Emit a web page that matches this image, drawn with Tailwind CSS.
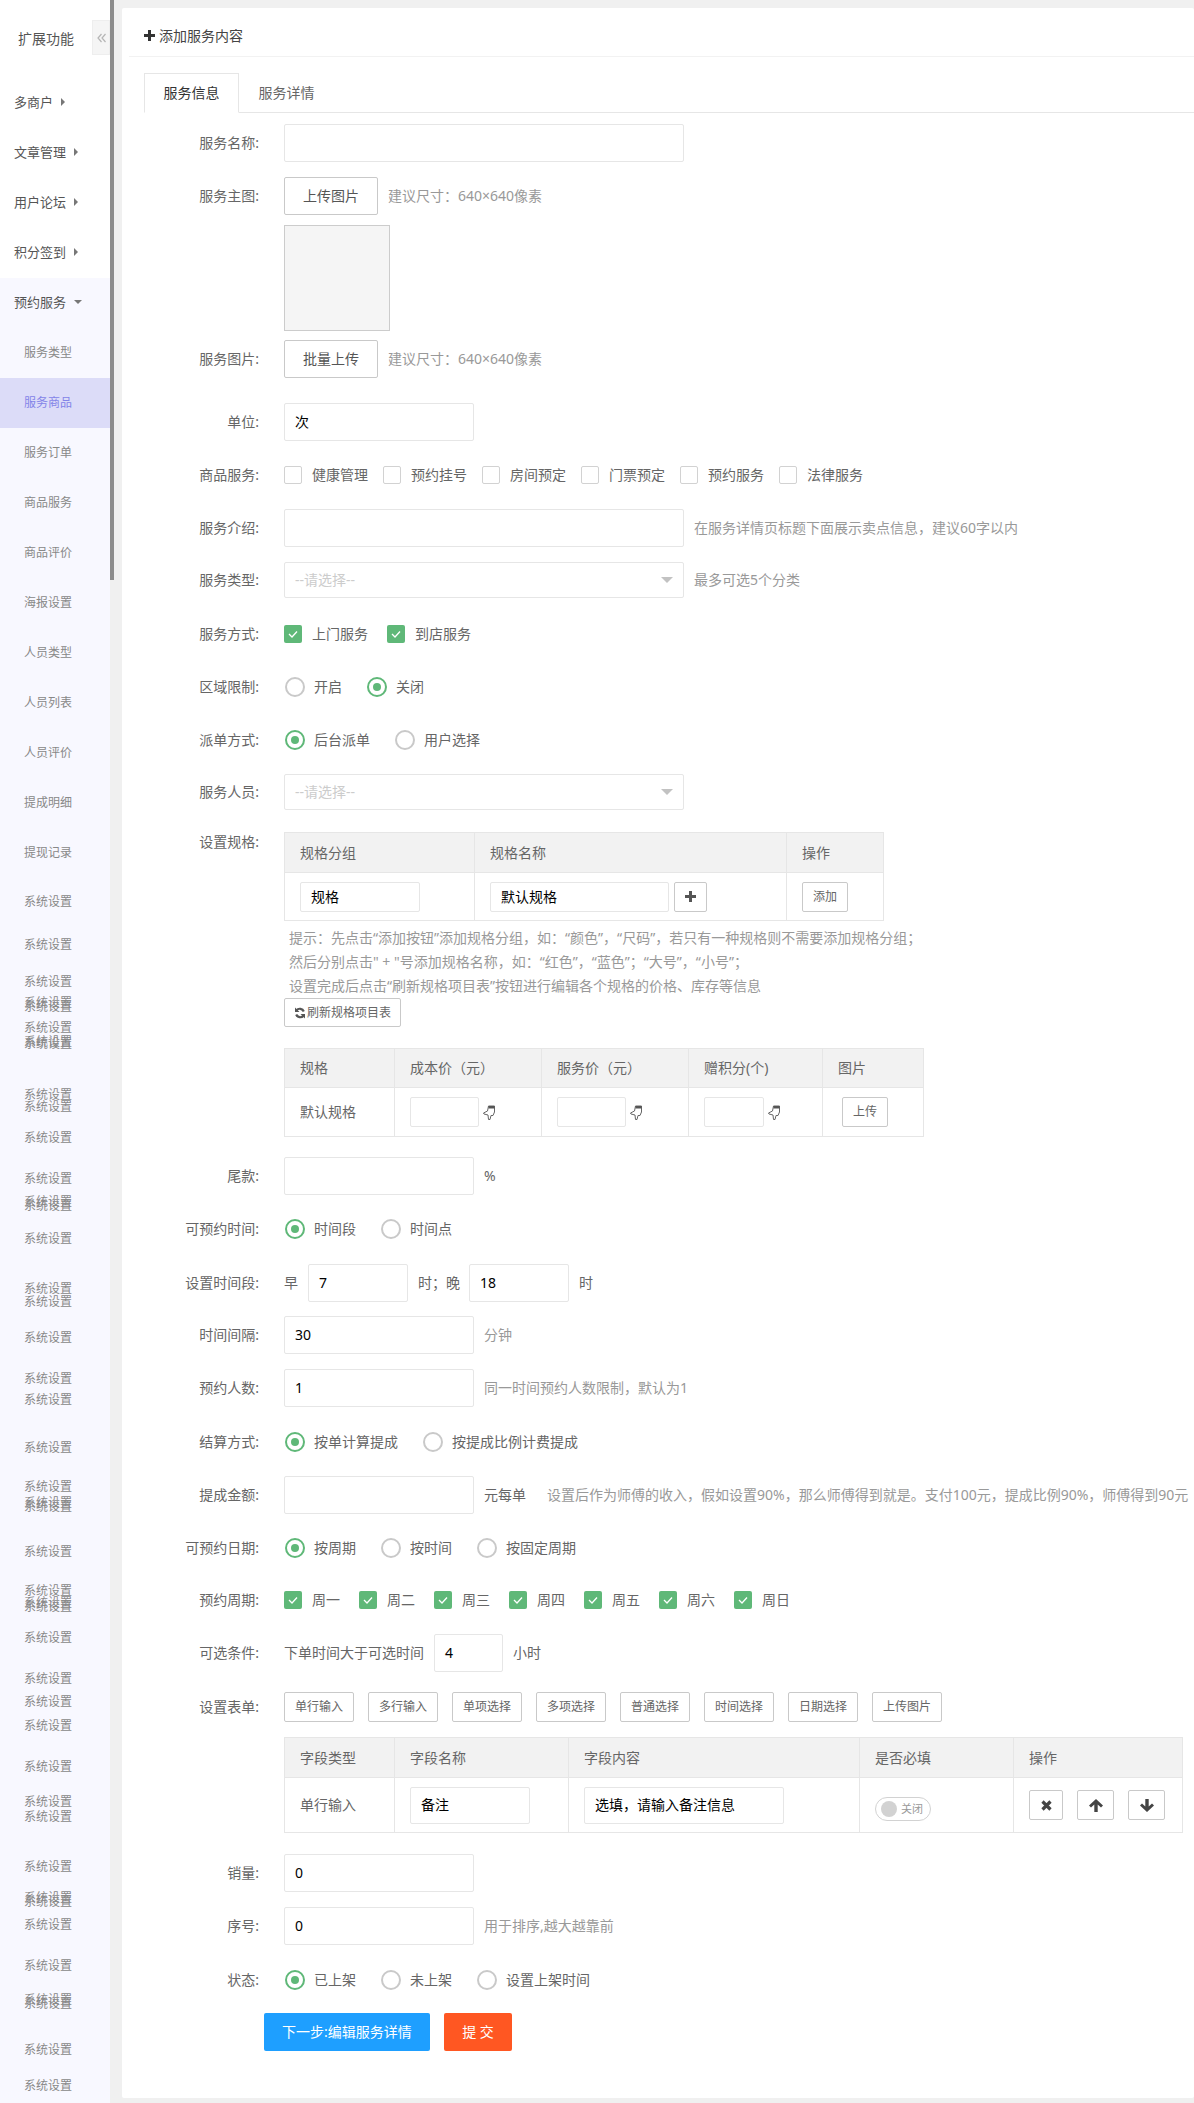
<!DOCTYPE html>
<html lang="zh-CN">
<head>
  <meta charset="UTF-8" />
  <title>添加服务内容</title>
  <script src="https://cdn.jsdelivr.net/npm/@tailwindcss/browser@4"></script>
</head>
<body class="bg-[#f0f0f0] text-[#666] text-[14px] leading-[20px] font-['Noto_Sans','Noto_Sans_CJK_SC',sans-serif]">
<div class="flex h-[2103px] overflow-hidden">

  <!-- Sidebar -->
  <aside class="w-[110px] shrink-0 bg-white text-[13px] text-[#555]">
    <div class="flex h-[78px] items-start">
      <div class="w-[92px] pt-[23px] h-[55px] flex items-center justify-center text-[14px]">扩展功能</div>
      <div class="w-[18px] h-[35px] mt-[20px] bg-[#f5f5f5] border border-[#eee] flex items-center justify-center">
        <svg class="w-[9px] h-[10px]" viewBox="0 0 9 10" fill="none" stroke="#b5b5b5" stroke-width="1.2"><path d="M4.500 1L1 5l3.500 4M8.500 1L5 5l3.500 4"/></svg>
      </div>
    </div>
    <div class="h-[50px] pl-[14px] pb-[2px] flex items-center gap-[8px]">多商户 <span class="w-0 h-0 border-y-[4px] border-y-transparent border-l-[4px] border-l-[#777]"></span></div>
    <div class="h-[50px] pl-[14px] pb-[2px] flex items-center gap-[8px]">文章管理 <span class="w-0 h-0 border-y-[4px] border-y-transparent border-l-[4px] border-l-[#777]"></span></div>
    <div class="h-[50px] pl-[14px] pb-[2px] flex items-center gap-[8px]">用户论坛 <span class="w-0 h-0 border-y-[4px] border-y-transparent border-l-[4px] border-l-[#777]"></span></div>
    <div class="h-[50px] pl-[14px] pb-[2px] flex items-center gap-[8px]">积分签到 <span class="w-0 h-0 border-y-[4px] border-y-transparent border-l-[4px] border-l-[#777]"></span></div>
    <div class="bg-[#f8f8ff] h-[1825px] text-[12px] text-[#888] text-center">
      <div class="h-[50px] pl-[14px] pb-[2px] flex items-center gap-[8px] text-[13px] text-[#555]">预约服务 <span class="w-0 h-0 border-x-[4px] border-x-transparent border-t-[4px] border-t-[#777]"></span></div>
      <div class="h-[50px] pr-[14px] leading-[50px]">服务类型</div>
      <div class="h-[50px] pr-[14px] leading-[50px] bg-[#dcdcf8] text-[#8484e8]">服务商品</div>
      <div class="h-[50px] pr-[14px] leading-[50px]">服务订单</div>
      <div class="h-[50px] pr-[14px] leading-[50px]">商品服务</div>
      <div class="h-[50px] pr-[14px] leading-[50px]">商品评价</div>
      <div class="h-[50px] pr-[14px] leading-[50px]">海报设置</div>
      <div class="h-[50px] pr-[14px] leading-[50px]">人员类型</div>
      <div class="h-[50px] pr-[14px] leading-[50px]">人员列表</div>
      <div class="h-[50px] pr-[14px] leading-[50px]">人员评价</div>
      <div class="h-[50px] pr-[14px] leading-[50px]">提成明细</div>
      <div class="h-[50px] pr-[14px] leading-[50px]">提现记录</div>
      <!-- rows below overlap in the source, text centre sits on each row's top edge -->
      <div class="mt-[24px] pr-[14px] leading-[0px]">
        <div class="h-[43px]">系统设置</div>
        <div class="h-[37px]">系统设置</div>
        <div class="h-[21px]">系统设置</div>
        <div class="h-[4px]">系统设置</div>
        <div class="h-[21px]">系统设置</div>
        <div class="h-[14px]">系统设置</div>
        <div class="h-[2px]">系统设置</div>
        <div class="h-[51px]">系统设置</div>
        <div class="h-[12px]">系统设置</div>
        <div class="h-[31px]">系统设置</div>
        <div class="h-[41px]">系统设置</div>
        <div class="h-[23px]">系统设置</div>
        <div class="h-[4px]">系统设置</div>
        <div class="h-[33px]">系统设置</div>
        <div class="h-[50px]">系统设置</div>
        <div class="h-[13px]">系统设置</div>
        <div class="h-[36px]">系统设置</div>
        <div class="h-[41px]">系统设置</div>
        <div class="h-[21px]">系统设置</div>
        <div class="h-[48px]">系统设置</div>
        <div class="h-[39px]">系统设置</div>
        <div class="h-[16px]">系统设置</div>
        <div class="h-[4px]">系统设置</div>
        <div class="h-[45px]">系统设置</div>
        <div class="h-[39px]">系统设置</div>
        <div class="h-[12px]">系统设置</div>
        <div class="h-[4px]">系统设置</div>
        <div class="h-[31px]">系统设置</div>
        <div class="h-[41px]">系统设置</div>
        <div class="h-[23px]">系统设置</div>
        <div class="h-[24px]">系统设置</div>
        <div class="h-[41px]">系统设置</div>
        <div class="h-[35px]">系统设置</div>
        <div class="h-[15px]">系统设置</div>
        <div class="h-[50px]">系统设置</div>
        <div class="h-[31px]">系统设置</div>
        <div class="h-[4px]">系统设置</div>
        <div class="h-[23px]">系统设置</div>
        <div class="h-[41px]">系统设置</div>
        <div class="h-[34px]">系统设置</div>
        <div class="h-[4px]">系统设置</div>
        <div class="h-[46px]">系统设置</div>
        <div class="h-[36px]">系统设置</div>
        <div class="h-[13px]">系统设置</div>
      </div>
    </div>
  </aside>

  <!-- Scrollbar -->
  <div class="w-[4px] shrink-0 bg-[#f0f0f0]"><div class="h-[580px] bg-[#8c8c8c]"></div></div>

  <!-- Main -->
  <main class="flex-1 min-w-0 pl-[8px] pt-[8px]">
    <div class="bg-white rounded-[2px] h-[2090px]">
      <div class="h-[49px] ml-[7px] pl-[15px] pt-[7px] border-b border-[#f2f2f2] flex items-center gap-[4px] text-[#444]">
        <svg class="w-[11px] h-[11px]" viewBox="0 0 11 11"><path d="M4 0h3v4h4v3H7v4H4V7H0V4h4z" fill="#333"/></svg>
        添加服务内容
      </div>

      <!-- Tabs -->
      <div class="mt-[16px] ml-[22px] h-[40px] flex border-b border-[#e6e6e6]">
        <div class="w-[95px] h-[40px] border border-[#e6e6e6] border-b-white bg-white text-[#333] flex items-center justify-center">服务信息</div>
        <div class="w-[95px] h-[40px] flex items-center justify-center">服务详情</div>
      </div>

      <form class="pl-[162px]">
        <!-- 服务名称 -->
        <div class="relative flex items-center h-[38px] mt-[11px]">
          <label class="w-[137px] -ml-[162px] mr-[25px] text-right">服务名称:</label>
          <div class="w-[400px] h-[38px] border border-[#e6e6e6] rounded-[2px]"></div>
        </div>

        <!-- 服务主图 -->
        <div class="flex items-center h-[38px] mt-[15px]">
          <label class="w-[137px] -ml-[162px] mr-[25px] text-right">服务主图:</label>
          <div class="w-[94px] h-[38px] border border-[#c9c9c9] rounded-[2px] flex items-center justify-center text-[#555]">上传图片</div>
          <span class="ml-[10px] text-[#999]">建议尺寸：640×640像素</span>
        </div>
        <div class="w-[106px] h-[106px] mt-[10px] bg-[#f5f5f5] border border-[#ccc]"></div>

        <!-- 服务图片 -->
        <div class="flex items-center h-[38px] mt-[9px]">
          <label class="w-[137px] -ml-[162px] mr-[25px] text-right">服务图片:</label>
          <div class="w-[94px] h-[38px] border border-[#c9c9c9] rounded-[2px] flex items-center justify-center text-[#555]">批量上传</div>
          <span class="ml-[10px] text-[#999]">建议尺寸：640×640像素</span>
        </div>

        <!-- 单位 -->
        <div class="flex items-center h-[38px] mt-[25px]">
          <label class="w-[137px] -ml-[162px] mr-[25px] text-right">单位:</label>
          <div class="w-[190px] h-[38px] pl-[10px] border border-[#e6e6e6] rounded-[2px] flex items-center text-black">次</div>
        </div>

        <!-- 商品服务 -->
        <div class="flex items-center h-[18px] mt-[25px]">
          <label class="w-[137px] -ml-[162px] mr-[25px] text-right">商品服务:</label>
          <div class="flex items-center">
            <span class="w-[18px] h-[18px] border border-[#d2d2d2] rounded-[2px] mr-[10px]"></span><span class="mr-[15px]">健康管理</span>
            <span class="w-[18px] h-[18px] border border-[#d2d2d2] rounded-[2px] mr-[10px]"></span><span class="mr-[15px]">预约挂号</span>
            <span class="w-[18px] h-[18px] border border-[#d2d2d2] rounded-[2px] mr-[10px]"></span><span class="mr-[15px]">房间预定</span>
            <span class="w-[18px] h-[18px] border border-[#d2d2d2] rounded-[2px] mr-[10px]"></span><span class="mr-[15px]">门票预定</span>
            <span class="w-[18px] h-[18px] border border-[#d2d2d2] rounded-[2px] mr-[10px]"></span><span class="mr-[15px]">预约服务</span>
            <span class="w-[18px] h-[18px] border border-[#d2d2d2] rounded-[2px] mr-[10px]"></span><span class="mr-[15px]">法律服务</span>
          </div>
        </div>

        <!-- 服务介绍 -->
        <div class="flex items-center h-[38px] mt-[25px]">
          <label class="w-[137px] -ml-[162px] mr-[25px] text-right">服务介绍:</label>
          <div class="w-[400px] h-[38px] border border-[#e6e6e6] rounded-[2px]"></div>
          <span class="ml-[10px] text-[#999]">在服务详情页标题下面展示卖点信息，建议60字以内</span>
        </div>

        <!-- 服务类型 -->
        <div class="flex items-center h-[36px] mt-[15px]">
          <label class="w-[137px] -ml-[162px] mr-[25px] text-right">服务类型:</label>
          <div class="w-[400px] h-[36px] px-[10px] border border-[#e6e6e6] rounded-[2px] flex items-center justify-between text-[#ccc]">--请选择--<span class="w-0 h-0 border-x-[6px] border-x-transparent border-t-[6px] border-t-[#c2c2c2]"></span></div>
          <span class="ml-[10px] text-[#999]">最多可选5个分类</span>
        </div>

        <!-- 服务方式 -->
        <div class="flex items-center h-[18px] mt-[27px]">
          <label class="w-[137px] -ml-[162px] mr-[25px] text-right">服务方式:</label>
          <span class="w-[18px] h-[18px] rounded-[2px] bg-[#5fb878] mr-[10px] flex items-center justify-center"><svg class="w-[12px] h-[12px]" viewBox="0 0 12 12" fill="none" stroke="white" stroke-width="1.3"><path d="M2 6l3 3 5-5.5"/></svg></span><span class="mr-[19px]">上门服务</span>
          <span class="w-[18px] h-[18px] rounded-[2px] bg-[#5fb878] mr-[10px] flex items-center justify-center"><svg class="w-[12px] h-[12px]" viewBox="0 0 12 12" fill="none" stroke="white" stroke-width="1.3"><path d="M2 6l3 3 5-5.5"/></svg></span><span>到店服务</span>
        </div>

        <!-- 区域限制 -->
        <div class="flex items-center h-[20px] mt-[34px]">
          <label class="w-[137px] -ml-[162px] mr-[25px] text-right">区域限制:</label>
          <span class="ml-[1px] w-[20px] h-[20px] rounded-full border-2 border-[#c9c9c9] mr-[9px]"></span><span class="mr-[25px]">开启</span>
          <span class="w-[20px] h-[20px] rounded-full border-2 border-[#5fb878] mr-[9px] flex items-center justify-center"><span class="w-[8px] h-[8px] rounded-full bg-[#5fb878]"></span></span><span>关闭</span>
        </div>

        <!-- 派单方式 -->
        <div class="flex items-center h-[20px] mt-[33px]">
          <label class="w-[137px] -ml-[162px] mr-[25px] text-right">派单方式:</label>
          <span class="ml-[1px] w-[20px] h-[20px] rounded-full border-2 border-[#5fb878] mr-[9px] flex items-center justify-center"><span class="w-[8px] h-[8px] rounded-full bg-[#5fb878]"></span></span><span class="mr-[25px]">后台派单</span>
          <span class="w-[20px] h-[20px] rounded-full border-2 border-[#c9c9c9] mr-[9px]"></span><span>用户选择</span>
        </div>

        <!-- 服务人员 -->
        <div class="flex items-center h-[36px] mt-[24px]">
          <label class="w-[137px] -ml-[162px] mr-[25px] text-right">服务人员:</label>
          <div class="w-[400px] h-[36px] px-[10px] border border-[#e6e6e6] rounded-[2px] flex items-center justify-between text-[#ccc]">--请选择--<span class="w-0 h-0 border-x-[6px] border-x-transparent border-t-[6px] border-t-[#c2c2c2]"></span></div>
        </div>

        <!-- 设置规格 -->
        <div class="flex items-start mt-[22px]">
          <label class="w-[137px] -ml-[162px] mr-[25px] text-right">设置规格:</label>
          <div>
            <table class="w-[600px] table-fixed border-collapse border border-[#e6e6e6]">
              <tr class="h-[40px] bg-[#f2f2f2] text-left">
                <th class="w-[190px] font-normal pl-[15px] border border-[#e6e6e6]">规格分组</th>
                <th class="w-[312px] font-normal pl-[15px] border border-[#e6e6e6]">规格名称</th>
                <th class="font-normal pl-[15px] border border-[#e6e6e6]">操作</th>
              </tr>
              <tr class="h-[48px]">
                <td class="pl-[15px] border border-[#e6e6e6]"><div class="w-[120px] h-[30px] pl-[10px] border border-[#e6e6e6] rounded-[2px] flex items-center text-black">规格</div></td>
                <td class="pl-[15px] border border-[#e6e6e6]"><div class="flex gap-[5px]"><div class="w-[179px] h-[30px] pl-[10px] border border-[#e6e6e6] rounded-[2px] flex items-center text-black">默认规格</div><div class="w-[33px] h-[30px] border border-[#c9c9c9] rounded-[2px] flex items-center justify-center"><svg class="w-[11px] h-[11px]" viewBox="0 0 11 11"><path d="M4 0h3v4h4v3H7v4H4V7H0V4h4z" fill="#555"/></svg></div></div></td>
                <td class="pl-[15px] border border-[#e6e6e6]"><div class="w-[46px] h-[30px] border border-[#c9c9c9] rounded-[2px] flex items-center justify-center text-[12px]">添加</div></td>
              </tr>
            </table>
            <div class="mt-[5px] pl-[5px] leading-[24px] text-[#999] whitespace-nowrap">
              <p>提示：先点击“添加按钮”添加规格分组，如：“颜色”，“尺码”，若只有一种规格则不需要添加规格分组；</p>
              <p>然后分别点击" + "号添加规格名称，如：“红色”，“蓝色”；“大号”，“小号”；</p>
              <p>设置完成后点击“刷新规格项目表”按钮进行编辑各个规格的价格、库存等信息</p>
            </div>
            <div class="w-[117px] h-[29px] border border-[#c9c9c9] rounded-[2px] flex items-center justify-center gap-[1px] text-[12px]">
              <svg class="w-[12px] h-[12px]" viewBox="0 0 12 12" fill="none" stroke="#555" stroke-width="2.2"><path d="M9.800 4.500A4.300 4.300 0 0 0 2.500 3.300M2.200 7.500A4.300 4.300 0 0 0 9.500 8.700"/><path d="M1 .5v4.500h4.500zM11 11.500V7H6.500z" fill="#555" stroke="none"/></svg>刷新规格项目表
            </div>
            <table class="w-[640px] mt-[21px] table-fixed border-collapse border border-[#e6e6e6]">
              <tr class="h-[39px] bg-[#f2f2f2] text-left">
                <th class="w-[110px] font-normal pl-[15px] border border-[#e6e6e6]">规格</th>
                <th class="w-[147px] font-normal pl-[15px] border border-[#e6e6e6]">成本价（元）</th>
                <th class="w-[147px] font-normal pl-[15px] border border-[#e6e6e6]">服务价（元）</th>
                <th class="w-[134px] font-normal pl-[15px] border border-[#e6e6e6]">赠积分(个)</th>
                <th class="font-normal pl-[15px] border border-[#e6e6e6]">图片</th>
              </tr>
              <tr class="h-[49px]">
                <td class="pl-[15px] border border-[#e6e6e6]">默认规格</td>
                <td class="pl-[15px] border border-[#e6e6e6]"><div class="flex items-center gap-[4px]"><div class="w-[69px] h-[30px] border border-[#e6e6e6] rounded-[2px]"></div><svg class="w-[13px] h-[15px]" viewBox="0 0 13 15"><path d="M5.500 1h6v6L10 10.500H8L7 14.500H5.500L5 10 1 9 .5 8l4-2z" fill="white" stroke="#666"/><path d="M5.500 1h6v2.500h-6z" fill="#555"/></svg></div></td>
                <td class="pl-[15px] border border-[#e6e6e6]"><div class="flex items-center gap-[4px]"><div class="w-[69px] h-[30px] border border-[#e6e6e6] rounded-[2px]"></div><svg class="w-[13px] h-[15px]" viewBox="0 0 13 15"><path d="M5.500 1h6v6L10 10.500H8L7 14.500H5.500L5 10 1 9 .5 8l4-2z" fill="white" stroke="#666"/><path d="M5.500 1h6v2.500h-6z" fill="#555"/></svg></div></td>
                <td class="pl-[15px] border border-[#e6e6e6]"><div class="flex items-center gap-[4px]"><div class="w-[60px] h-[30px] border border-[#e6e6e6] rounded-[2px]"></div><svg class="w-[13px] h-[15px]" viewBox="0 0 13 15"><path d="M5.500 1h6v6L10 10.500H8L7 14.500H5.500L5 10 1 9 .5 8l4-2z" fill="white" stroke="#666"/><path d="M5.500 1h6v2.500h-6z" fill="#555"/></svg></div></td>
                <td class="pl-[19px] border border-[#e6e6e6]"><div class="w-[46px] h-[30px] border border-[#c9c9c9] rounded-[2px] flex items-center justify-center text-[12px]">上传</div></td>
              </tr>
            </table>
          </div>
        </div>

        <!-- 尾款 -->
        <div class="flex items-center h-[38px] mt-[20px]">
          <label class="w-[137px] -ml-[162px] mr-[25px] text-right">尾款:</label>
          <div class="w-[190px] h-[38px] border border-[#e6e6e6] rounded-[2px]"></div>
          <span class="ml-[10px]">%</span>
        </div>

        <!-- 可预约时间 -->
        <div class="flex items-center h-[20px] mt-[24px]">
          <label class="w-[137px] -ml-[162px] mr-[25px] text-right">可预约时间:</label>
          <span class="ml-[1px] w-[20px] h-[20px] rounded-full border-2 border-[#5fb878] mr-[9px] flex items-center justify-center"><span class="w-[8px] h-[8px] rounded-full bg-[#5fb878]"></span></span><span class="mr-[25px]">时间段</span>
          <span class="w-[20px] h-[20px] rounded-full border-2 border-[#c9c9c9] mr-[9px]"></span><span>时间点</span>
        </div>

        <!-- 设置时间段 -->
        <div class="flex items-center h-[38px] mt-[25px]">
          <label class="w-[137px] -ml-[162px] mr-[25px] text-right">设置时间段:</label>
          <span class="mr-[10px]">早</span>
          <div class="w-[100px] h-[38px] pl-[10px] border border-[#e6e6e6] rounded-[2px] flex items-center text-black">7</div>
          <span class="ml-[10px] mr-[9px]">时；晚</span>
          <div class="w-[100px] h-[38px] pl-[10px] border border-[#e6e6e6] rounded-[2px] flex items-center text-black">18</div>
          <span class="ml-[10px]">时</span>
        </div>

        <!-- 时间间隔 -->
        <div class="flex items-center h-[38px] mt-[14px]">
          <label class="w-[137px] -ml-[162px] mr-[25px] text-right">时间间隔:</label>
          <div class="w-[190px] h-[38px] pl-[10px] border border-[#e6e6e6] rounded-[2px] flex items-center text-black">30</div>
          <span class="ml-[10px] text-[#999]">分钟</span>
        </div>

        <!-- 预约人数 -->
        <div class="flex items-center h-[38px] mt-[15px]">
          <label class="w-[137px] -ml-[162px] mr-[25px] text-right">预约人数:</label>
          <div class="w-[190px] h-[38px] pl-[10px] border border-[#e6e6e6] rounded-[2px] flex items-center text-black">1</div>
          <span class="ml-[10px] text-[#999]">同一时间预约人数限制，默认为1</span>
        </div>

        <!-- 结算方式 -->
        <div class="flex items-center h-[20px] mt-[25px]">
          <label class="w-[137px] -ml-[162px] mr-[25px] text-right">结算方式:</label>
          <span class="ml-[1px] w-[20px] h-[20px] rounded-full border-2 border-[#5fb878] mr-[9px] flex items-center justify-center"><span class="w-[8px] h-[8px] rounded-full bg-[#5fb878]"></span></span><span class="mr-[25px]">按单计算提成</span>
          <span class="w-[20px] h-[20px] rounded-full border-2 border-[#c9c9c9] mr-[9px]"></span><span>按提成比例计费提成</span>
        </div>

        <!-- 提成金额 -->
        <div class="flex items-center h-[38px] mt-[24px]">
          <label class="w-[137px] -ml-[162px] mr-[25px] text-right">提成金额:</label>
          <div class="w-[190px] h-[38px] border border-[#e6e6e6] rounded-[2px]"></div>
          <span class="ml-[10px] mr-[21px]">元每单</span>
          <span class="text-[#999] whitespace-nowrap">设置后作为师傅的收入，假如设置90%，那么师傅得到就是。支付100元，提成比例90%，师傅得到90元</span>
        </div>

        <!-- 可预约日期 -->
        <div class="flex items-center h-[20px] mt-[24px]">
          <label class="w-[137px] -ml-[162px] mr-[25px] text-right">可预约日期:</label>
          <span class="ml-[1px] w-[20px] h-[20px] rounded-full border-2 border-[#5fb878] mr-[9px] flex items-center justify-center"><span class="w-[8px] h-[8px] rounded-full bg-[#5fb878]"></span></span><span class="mr-[25px]">按周期</span>
          <span class="w-[20px] h-[20px] rounded-full border-2 border-[#c9c9c9] mr-[9px]"></span><span class="mr-[25px]">按时间</span>
          <span class="w-[20px] h-[20px] rounded-full border-2 border-[#c9c9c9] mr-[9px]"></span><span>按固定周期</span>
        </div>

        <!-- 预约周期 -->
        <div class="flex items-center h-[18px] mt-[33px]">
          <label class="w-[137px] -ml-[162px] mr-[25px] text-right">预约周期:</label>
          <span class="w-[18px] h-[18px] rounded-[2px] bg-[#5fb878] mr-[10px] flex items-center justify-center"><svg class="w-[12px] h-[12px]" viewBox="0 0 12 12" fill="none" stroke="white" stroke-width="1.3"><path d="M2 6l3 3 5-5.5"/></svg></span><span class="mr-[19px]">周一</span>
          <span class="w-[18px] h-[18px] rounded-[2px] bg-[#5fb878] mr-[10px] flex items-center justify-center"><svg class="w-[12px] h-[12px]" viewBox="0 0 12 12" fill="none" stroke="white" stroke-width="1.3"><path d="M2 6l3 3 5-5.5"/></svg></span><span class="mr-[19px]">周二</span>
          <span class="w-[18px] h-[18px] rounded-[2px] bg-[#5fb878] mr-[10px] flex items-center justify-center"><svg class="w-[12px] h-[12px]" viewBox="0 0 12 12" fill="none" stroke="white" stroke-width="1.3"><path d="M2 6l3 3 5-5.5"/></svg></span><span class="mr-[19px]">周三</span>
          <span class="w-[18px] h-[18px] rounded-[2px] bg-[#5fb878] mr-[10px] flex items-center justify-center"><svg class="w-[12px] h-[12px]" viewBox="0 0 12 12" fill="none" stroke="white" stroke-width="1.3"><path d="M2 6l3 3 5-5.5"/></svg></span><span class="mr-[19px]">周四</span>
          <span class="w-[18px] h-[18px] rounded-[2px] bg-[#5fb878] mr-[10px] flex items-center justify-center"><svg class="w-[12px] h-[12px]" viewBox="0 0 12 12" fill="none" stroke="white" stroke-width="1.3"><path d="M2 6l3 3 5-5.5"/></svg></span><span class="mr-[19px]">周五</span>
          <span class="w-[18px] h-[18px] rounded-[2px] bg-[#5fb878] mr-[10px] flex items-center justify-center"><svg class="w-[12px] h-[12px]" viewBox="0 0 12 12" fill="none" stroke="white" stroke-width="1.3"><path d="M2 6l3 3 5-5.5"/></svg></span><span class="mr-[19px]">周六</span>
          <span class="w-[18px] h-[18px] rounded-[2px] bg-[#5fb878] mr-[10px] flex items-center justify-center"><svg class="w-[12px] h-[12px]" viewBox="0 0 12 12" fill="none" stroke="white" stroke-width="1.3"><path d="M2 6l3 3 5-5.5"/></svg></span><span>周日</span>
        </div>

        <!-- 可选条件 -->
        <div class="flex items-center h-[38px] mt-[25px]">
          <label class="w-[137px] -ml-[162px] mr-[25px] text-right">可选条件:</label>
          <span class="mr-[10px]">下单时间大于可选时间</span>
          <div class="w-[69px] h-[38px] pl-[10px] border border-[#e6e6e6] rounded-[2px] flex items-center text-black">4</div>
          <span class="ml-[10px]">小时</span>
        </div>

        <!-- 设置表单 -->
        <div class="flex items-start mt-[20px]">
          <label class="w-[137px] -ml-[162px] mr-[25px] text-right pt-[5px]">设置表单:</label>
          <div>
            <div class="flex gap-[14px] text-[12px]">
              <div class="w-[70px] h-[30px] border border-[#c9c9c9] rounded-[2px] flex items-center justify-center">单行输入</div>
              <div class="w-[70px] h-[30px] border border-[#c9c9c9] rounded-[2px] flex items-center justify-center">多行输入</div>
              <div class="w-[70px] h-[30px] border border-[#c9c9c9] rounded-[2px] flex items-center justify-center">单项选择</div>
              <div class="w-[70px] h-[30px] border border-[#c9c9c9] rounded-[2px] flex items-center justify-center">多项选择</div>
              <div class="w-[70px] h-[30px] border border-[#c9c9c9] rounded-[2px] flex items-center justify-center">普通选择</div>
              <div class="w-[70px] h-[30px] border border-[#c9c9c9] rounded-[2px] flex items-center justify-center">时间选择</div>
              <div class="w-[70px] h-[30px] border border-[#c9c9c9] rounded-[2px] flex items-center justify-center">日期选择</div>
              <div class="w-[70px] h-[30px] border border-[#c9c9c9] rounded-[2px] flex items-center justify-center">上传图片</div>
            </div>
            <table class="w-[899px] mt-[15px] table-fixed border-collapse border border-[#e6e6e6]">
              <tr class="h-[40px] bg-[#f2f2f2] text-left">
                <th class="w-[110px] font-normal pl-[15px] border border-[#e6e6e6]">字段类型</th>
                <th class="w-[174px] font-normal pl-[15px] border border-[#e6e6e6]">字段名称</th>
                <th class="w-[291px] font-normal pl-[15px] border border-[#e6e6e6]">字段内容</th>
                <th class="w-[154px] font-normal pl-[15px] border border-[#e6e6e6]">是否必填</th>
                <th class="font-normal pl-[15px] border border-[#e6e6e6]">操作</th>
              </tr>
              <tr class="h-[55px]">
                <td class="pl-[15px] border border-[#e6e6e6]">单行输入</td>
                <td class="pl-[15px] border border-[#e6e6e6]"><div class="w-[120px] h-[37px] pl-[10px] border border-[#e6e6e6] rounded-[2px] flex items-center text-black">备注</div></td>
                <td class="pl-[15px] border border-[#e6e6e6]"><div class="w-[200px] h-[37px] pl-[10px] border border-[#e6e6e6] rounded-[2px] flex items-center text-black">选填，请输入备注信息</div></td>
                <td class="pl-[15px] border border-[#e6e6e6]"><div class="mt-[7px] w-[56px] h-[24px] border border-[#d2d2d2] rounded-full flex items-center pl-[5px] gap-[4px] text-[11px] text-[#999]"><span class="w-[16px] h-[16px] rounded-full bg-[#d2d2d2]"></span>关闭</div></td>
                <td class="pl-[15px] border border-[#e6e6e6]"><div class="flex gap-[14px]">
                  <div class="w-[34px] h-[30px] border border-[#c9c9c9] rounded-[2px] flex items-center justify-center"><svg class="w-[11px] h-[11px]" viewBox="0 0 11 11" stroke="#444" stroke-width="3.2"><path d="M1.500 1.500l8 8M9.500 1.500l-8 8"/></svg></div>
                  <div class="w-[37px] h-[30px] border border-[#c9c9c9] rounded-[2px] flex items-center justify-center"><svg class="w-[14px] h-[13px]" viewBox="0 0 14 13" fill="#444"><path d="M7 0l7 6.500-2 2L8.700 5.500V13H5.300V5.500L2 8.500l-2-2z"/></svg></div>
                  <div class="w-[37px] h-[30px] border border-[#c9c9c9] rounded-[2px] flex items-center justify-center"><svg class="w-[14px] h-[13px]" viewBox="0 0 14 13" fill="#444"><path d="M7 13l7-6.500-2-2-3.300 3V0H5.300v7.500L2 4.500l-2 2z"/></svg></div>
                </div></td>
              </tr>
            </table>
          </div>
        </div>

        <!-- 销量 -->
        <div class="flex items-center h-[38px] mt-[21px]">
          <label class="w-[137px] -ml-[162px] mr-[25px] text-right">销量:</label>
          <div class="w-[190px] h-[38px] pl-[10px] border border-[#e6e6e6] rounded-[2px] flex items-center text-black">0</div>
        </div>

        <!-- 序号 -->
        <div class="flex items-center h-[38px] mt-[15px]">
          <label class="w-[137px] -ml-[162px] mr-[25px] text-right">序号:</label>
          <div class="w-[190px] h-[38px] pl-[10px] border border-[#e6e6e6] rounded-[2px] flex items-center text-black">0</div>
          <span class="ml-[10px] text-[#999]">用于排序,越大越靠前</span>
        </div>

        <!-- 状态 -->
        <div class="flex items-center h-[20px] mt-[25px]">
          <label class="w-[137px] -ml-[162px] mr-[25px] text-right">状态:</label>
          <span class="ml-[1px] w-[20px] h-[20px] rounded-full border-2 border-[#5fb878] mr-[9px] flex items-center justify-center"><span class="w-[8px] h-[8px] rounded-full bg-[#5fb878]"></span></span><span class="mr-[25px]">已上架</span>
          <span class="w-[20px] h-[20px] rounded-full border-2 border-[#c9c9c9] mr-[9px]"></span><span class="mr-[25px]">未上架</span>
          <span class="w-[20px] h-[20px] rounded-full border-2 border-[#c9c9c9] mr-[9px]"></span><span>设置上架时间</span>
        </div>

        <!-- Buttons -->
        <div class="flex mt-[23px] -ml-[20px] gap-[14px] text-white">
          <div class="w-[166px] h-[38px] bg-[#1e9fff] rounded-[2px] flex items-center justify-center">下一步:编辑服务详情</div>
          <div class="w-[68px] h-[38px] bg-[#ff5722] rounded-[2px] flex items-center justify-center">提 交</div>
        </div>
      </form>
    </div>
  </main>
</div>
</body>
</html>
